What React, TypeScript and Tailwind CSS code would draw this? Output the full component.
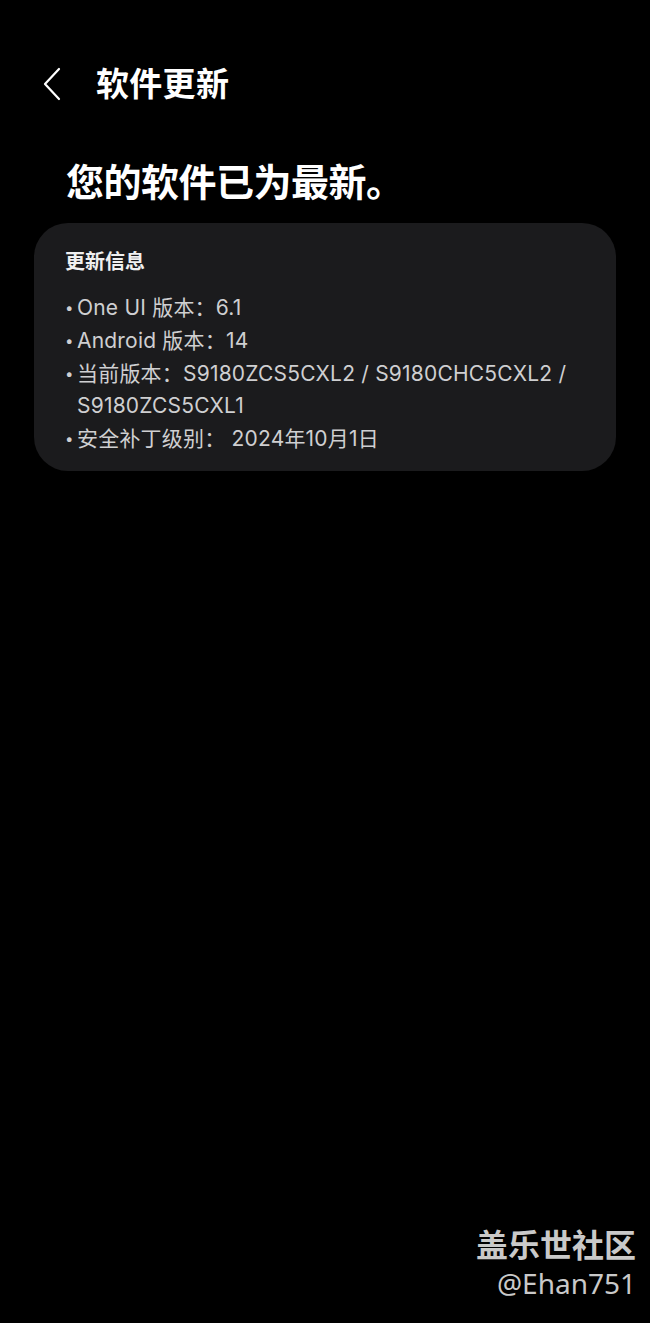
export default function App() {
  const items = [
    'One UI 版本：6.1',
    'Android 版本：14',
    '当前版本：S9180ZCS5CXL2 / S9180CHC5CXL2 / S9180ZCS5CXL1',
    '安全补丁级别： 2024年10月1日',
  ];

  return (
    <div
      className="relative min-h-[1323px] w-full overflow-hidden bg-black text-white"
      style={{ fontFamily: '"Inter", "Noto Sans CJK SC", sans-serif' }}
    >
      {/* 顶部导航 */}
      <div className="mt-[64px] flex h-[40px] items-center pl-[40px]">
        <svg width="26" height="36" viewBox="0 0 26 36" fill="none" className="shrink-0">
          <path d="M19 3 L5 18 L19 33" stroke="white" strokeWidth="2.2" strokeLinecap="round" strokeLinejoin="round" />
        </svg>
        <h1 className="ml-[30px] text-[33px] font-bold leading-none tracking-[0.3px]">软件更新</h1>
      </div>

      <h2 className="ml-[66px] mt-[59px] text-[38px] font-bold leading-none tracking-[-0.5px]">您的软件已为最新。</h2>

      {/* 更新信息卡片 */}
      <div className="mx-[34px] mt-[22px] h-[248px] rounded-[34px] bg-[#1b1b1d] pl-[31px] pr-[20px] pt-[29px]">
        <div className="text-[20px] font-bold leading-none text-[#f0f0f0]">更新信息</div>
        <ul className="mt-[20px] flex flex-col gap-[1px]">
          {items.map((t) => (
            <li key={t} className="flex text-[21px] leading-[32px] tracking-[0.2px] text-[#cfcfd1]">
              <span className="w-[12px] shrink-0 text-[15px]">•</span>
              <span>{t}</span>
            </li>
          ))}
        </ul>
      </div>

      {/* 水印 */}
      <div className="absolute bottom-[20px] right-[14px] flex flex-col items-end text-[#c9c9c9]">
        <div className="text-[32px] font-bold leading-[40px]" style={{ fontFamily: '"Noto Sans CJK SC", sans-serif' }}>
          盖乐世社区
        </div>
        <div className="text-[28px] leading-[40px]" style={{ fontFamily: '"Noto Sans", sans-serif' }}>
          @Ehan751
        </div>
      </div>
    </div>
  );
}
